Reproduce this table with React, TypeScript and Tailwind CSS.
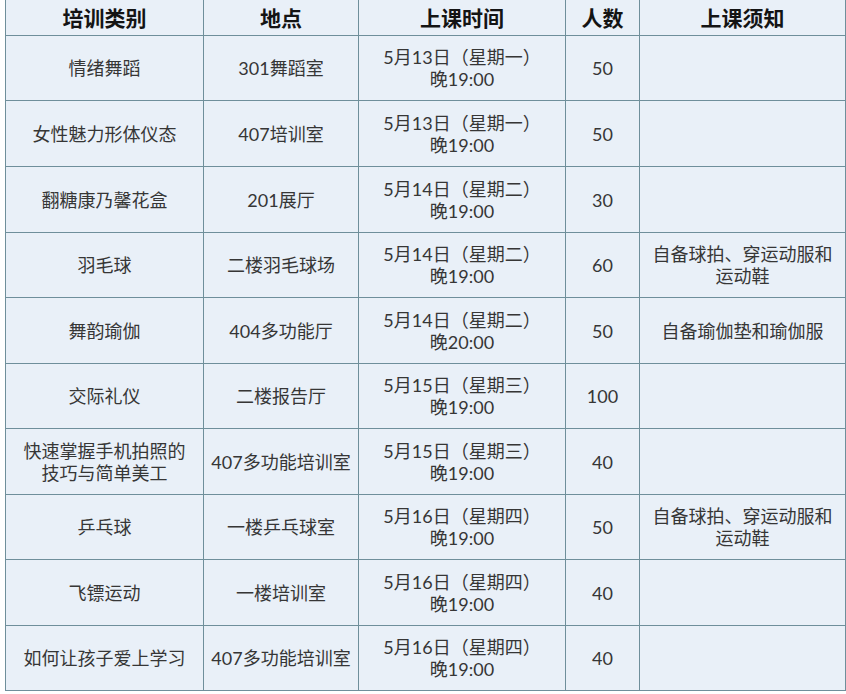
import React from "react";

type Row = { name: React.ReactNode; place: string; day: string; time: string; num: string; note: React.ReactNode; h: string };

const rows: Row[] = [
  { name: "情绪舞蹈", place: "301舞蹈室", day: "5月13日（星期一）", time: "晚19:00", num: "50", note: "", h: "h-[65px]" },
  { name: "女性魅力形体仪态", place: "407培训室", day: "5月13日（星期一）", time: "晚19:00", num: "50", note: "", h: "h-[66px]" },
  { name: "翻糖康乃馨花盒", place: "201展厅", day: "5月14日（星期二）", time: "晚19:00", num: "30", note: "", h: "h-[66px]" },
  { name: "羽毛球", place: "二楼羽毛球场", day: "5月14日（星期二）", time: "晚19:00", num: "60", note: <>自备球拍、穿运动服和<br />运动鞋</>, h: "h-[65px]" },
  { name: "舞韵瑜伽", place: "404多功能厅", day: "5月14日（星期二）", time: "晚20:00", num: "50", note: "自备瑜伽垫和瑜伽服", h: "h-[66px]" },
  { name: "交际礼仪", place: "二楼报告厅", day: "5月15日（星期三）", time: "晚19:00", num: "100", note: "", h: "h-[65px]" },
  { name: <>快速掌握手机拍照的<br />技巧与简单美工</>, place: "407多功能培训室", day: "5月15日（星期三）", time: "晚19:00", num: "40", note: "", h: "h-[66px]" },
  { name: "乒乓球", place: "一楼乒乓球室", day: "5月16日（星期四）", time: "晚19:00", num: "50", note: <>自备球拍、穿运动服和<br />运动鞋</>, h: "h-[65px]" },
  { name: "飞镖运动", place: "一楼培训室", day: "5月16日（星期四）", time: "晚19:00", num: "40", note: "", h: "h-[66px]" },
  { name: "如何让孩子爱上学习", place: "407多功能培训室", day: "5月16日（星期四）", time: "晚19:00", num: "40", note: "", h: "h-[65px]" },
];

const cell = "flex items-center justify-center text-center border-r border-b border-[#6f8f9b] leading-[22px]";

export default function App() {
  return (
    <div className="w-[846px] h-[694px] bg-white pl-[5px] overflow-hidden" style={{ fontFamily: 'Lato, "Noto Sans CJK SC", sans-serif' }}>
      <div className="w-[841px] border-l border-[#6f8f9b] bg-[#e9f0f8]">
        <div className="grid grid-cols-[198px_155px_207px_74px_206px] h-[36px] text-[21px] font-bold text-[#141414]">
          <div className={cell}>培训类别</div>
          <div className={cell}>地点</div>
          <div className={cell}>上课时间</div>
          <div className={cell}>人数</div>
          <div className={cell}>上课须知</div>
        </div>
        {rows.map((r, i) => (
          <div key={i} className={`grid grid-cols-[198px_155px_207px_74px_206px] ${r.h} text-[18px] text-[#363636]`}>
            <div className={cell}><span>{r.name}</span></div>
            <div className={cell}>{r.place}</div>
            <div className={cell}><span>{r.day}<br />{r.time}</span></div>
            <div className={cell}>{r.num}</div>
            <div className={cell}><span>{r.note}</span></div>
          </div>
        ))}
      </div>
    </div>
  );
}
